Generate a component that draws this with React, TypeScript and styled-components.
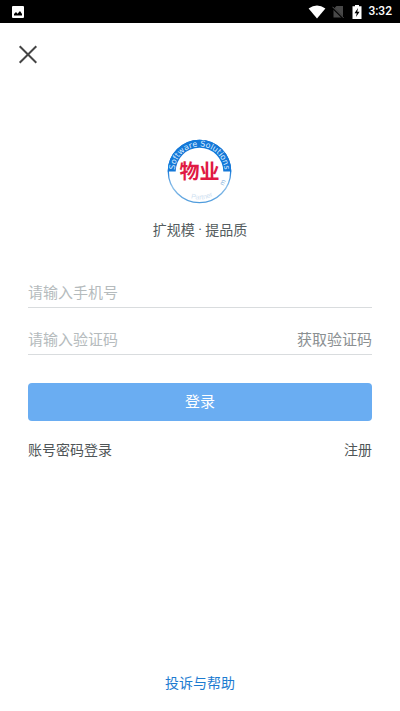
import React from "react";
import styled, { createGlobalStyle } from "styled-components";

const GlobalStyle = createGlobalStyle`
  *, *::before, *::after { box-sizing: border-box; }
  body {
    margin: 0;
    background: #fff;
    font-family: "Noto Sans CJK SC", sans-serif;
  }
  button, input { font-family: inherit; }
`;

const Screen = styled.div`
  min-height: 100vh;
  display: flex;
  flex-direction: column;
  background: #fff;
`;

const StatusBar = styled.div`
  height: 23px;
  flex: none;
  display: flex;
  align-items: center;
  justify-content: space-between;
  padding: 0 8px 0 11px;
  background: #000;
  color: #fff;
`;

const StatusIcons = styled.div`
  display: flex;
  align-items: center;
  gap: 6px;
`;

const BatteryGroup = styled.div`
  display: flex;
  align-items: center;
  gap: 6px;
  margin-left: 2px;
`;

const Clock = styled.time`
  font: 500 12px/23px Roboto, sans-serif;
`;

const Header = styled.header`
  display: flex;
  padding: 16px 12px;
`;

const PlainButton = styled.button`
  display: flex;
  padding: 0;
  border: 0;
  background: none;
  cursor: pointer;
`;

const CloseButton = styled(PlainButton)`
  width: 32px;
  height: 32px;
  align-items: center;
  justify-content: center;
`;

const Main = styled.main`
  flex: 1;
  display: flex;
  flex-direction: column;
  padding: 51px 28px 19px;
`;

const Brand = styled.div`
  display: flex;
  flex-direction: column;
  align-items: center;
  gap: 16px;
`;

const Slogan = styled.p`
  margin: 0;
  font-family: Roboto, "Noto Sans CJK SC", sans-serif;
  font-size: 14px;
  line-height: 20px;
  color: #555d60;
`;

const Form = styled.form`
  display: flex;
  flex-direction: column;
  margin-top: 37px;
`;

const Field = styled.div<{ $spaced?: boolean }>`
  display: flex;
  align-items: center;
  height: 31px;
  padding-bottom: 2px;
  margin-top: ${(p) => (p.$spaced ? 16 : 0)}px;
  border-bottom: 1px solid #d9dcde;
`;

const TextInput = styled.input`
  flex: 1;
  min-width: 0;
  height: 24px;
  padding: 0;
  border: 0;
  outline: 0;
  background: none;
  font-size: 15px;
  color: #333;
  &::placeholder { color: #b5bbbd; opacity: 1; }
`;

const CodeButton = styled(PlainButton)`
  padding-top: 2px;
  font-size: 15px;
  line-height: 24px;
  color: #8b9092;
`;

const SubmitButton = styled.button`
  height: 38px;
  margin-top: 28px;
  padding: 0 0 2px;
  border: 0;
  border-radius: 4px;
  background: #6aadf2;
  color: #fff;
  font-size: 15px;
  line-height: 24px;
  cursor: pointer;
`;

const Links = styled.nav`
  display: flex;
  justify-content: space-between;
  margin-top: 18px;
`;

const TextLink = styled.a<{ $accent?: boolean }>`
  font-size: 14px;
  line-height: 20px;
  text-decoration: none;
  color: ${(p) => (p.$accent ? "#1d7bd0" : "#4f5557")};
`;

const Footer = styled.footer`
  display: flex;
  justify-content: center;
  margin-top: auto;
`;

const PictureIcon = () => (
  <svg width="13" height="13" viewBox="0 0 13 13" aria-hidden="true">
    <rect x="1" y="1" width="12" height="12" rx="1" fill="#fff" />
    <path d="M3 10.5V9l2-2 1.500 1.800L9 6l2 3v1.500z" fill="#000" />
  </svg>
);

const WifiIcon = () => (
  <svg width="18" height="14" viewBox="0 0 18 14" aria-hidden="true">
    <path d="M0.600 3.600Q9-2.600 17.400 3.600L9 13.400z" fill="#fff" />
  </svg>
);

const NoSimIcon = () => (
  <svg width="12" height="14" viewBox="0 0 12 14" aria-hidden="true">
    <path d="M4.500 1H11v11.500H1.500V4z" fill="#484848" />
    <path d="M0.500 2.500 11.500 13.500" stroke="#000" strokeWidth="2" />
    <path d="M0.500 1.800 11.500 12.800" stroke="#5a5a5a" strokeWidth="1" />
  </svg>
);

const BatteryIcon = () => (
  <svg width="10" height="16" viewBox="0 0 10 16" aria-hidden="true">
    <path d="M3 1h4v1.200h2.500V15h-9V2.200H3z" fill="#fff" />
    <path d="M6 4 2.500 9.300h2.200L4 13l3.600-5.200H5.300z" fill="#000" />
  </svg>
);

const CloseIcon = () => (
  <svg width="20" height="20" viewBox="0 0 20 20" aria-hidden="true">
    <path d="M1.700 1.200 18.300 17.800M18.300 1.200 1.700 17.800" stroke="#454545" strokeWidth="2" />
  </svg>
);

const Logo = () => (
  <svg width="66" height="66" viewBox="0 0 66 66" role="img" aria-label="物业">
    <defs>
      <linearGradient id="rim" x1="0" y1="32" x2="0" y2="65" gradientUnits="userSpaceOnUse">
        <stop offset="0" stopColor="#1478d8" />
        <stop offset="0.5" stopColor="#8dbfe9" />
        <stop offset="1" stopColor="#4e9bdc" />
      </linearGradient>
      <path id="topArc" d="M7.500 33.500a25 25 0 0 1 50 0" />
      <path id="bottomArc" d="M4.500 33.500a28 28 0 0 0 56 0" />
    </defs>
    <circle cx="32.500" cy="33.500" r="31.200" fill="#fff" stroke="url(#rim)" strokeWidth="1.300" />
    <path d="M0.700 33.500a31.800 31.800 0 0 1 63.600 0h-8a23.800 23.800 0 0 0-47.600 0z" fill="#1478d8" />
    <text fontFamily="DejaVu Sans, sans-serif" fontSize="8" fill="#d9ebff">
      <textPath href="#topArc" startOffset="50%" textAnchor="middle">Software Solutions</textPath>
    </text>
    <text fontFamily="Liberation Sans, sans-serif" fontSize="7" fill="#cfe1f1">
      <textPath href="#bottomArc" startOffset="53%" textAnchor="middle">Partner</textPath>
    </text>
    <text fontFamily="Liberation Sans, sans-serif" fontSize="7" fill="#8fb8e0">
      <textPath href="#bottomArc" startOffset="86%" textAnchor="middle">m</textPath>
    </text>
    <text x="32.500" y="41" textAnchor="middle" fontFamily="Noto Sans CJK SC, sans-serif" fontWeight="700" fontSize="20" fill="#e01a44">物业</text>
  </svg>
);

export default function App() {
  return (
    <>
      <GlobalStyle />
      <Screen>
        <StatusBar>
          <PictureIcon />
          <StatusIcons>
            <WifiIcon />
            <NoSimIcon />
            <BatteryGroup>
              <BatteryIcon />
              <Clock>3:32</Clock>
            </BatteryGroup>
          </StatusIcons>
        </StatusBar>
        <Header>
          <CloseButton type="button" aria-label="关闭"><CloseIcon /></CloseButton>
        </Header>
        <Main>
          <Brand>
            <Logo />
            <Slogan>扩规模 · 提品质</Slogan>
          </Brand>
          <Form onSubmit={(e) => e.preventDefault()}>
            <Field>
              <TextInput type="tel" aria-label="手机号" placeholder="请输入手机号" />
            </Field>
            <Field $spaced>
              <TextInput type="text" inputMode="numeric" aria-label="验证码" placeholder="请输入验证码" />
              <CodeButton type="button">获取验证码</CodeButton>
            </Field>
            <SubmitButton type="submit">登录</SubmitButton>
          </Form>
          <Links>
            <TextLink href="#password">账号密码登录</TextLink>
            <TextLink href="#register">注册</TextLink>
          </Links>
          <Footer>
            <TextLink href="#help" $accent>投诉与帮助</TextLink>
          </Footer>
        </Main>
      </Screen>
    </>
  );
}
